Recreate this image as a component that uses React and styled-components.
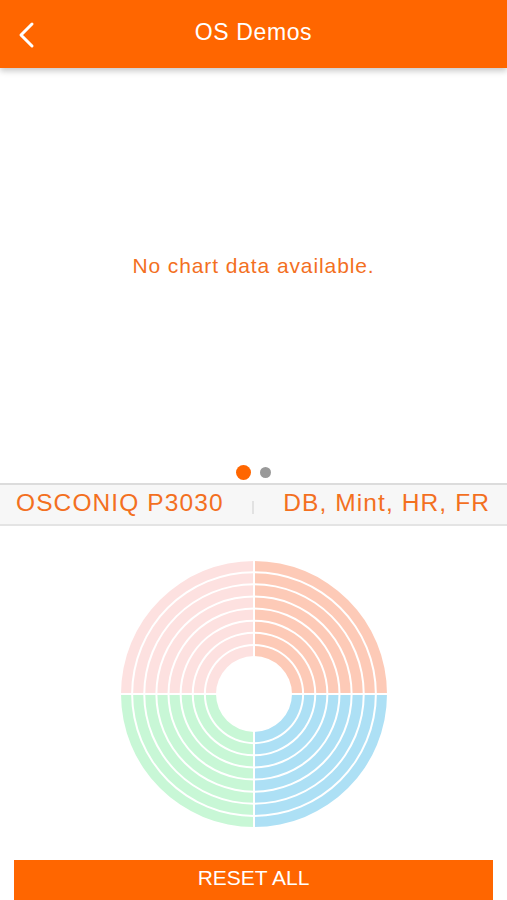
import styled, { createGlobalStyle } from "styled-components";

const ORANGE = "#ff6600";
const TEXT_ORANGE = "#f3701f";

const GlobalStyle = createGlobalStyle`
  html, body {
    margin: 0;
    padding: 0;
    background: #ffffff;
    font-family: "Liberation Sans", Arial, sans-serif;
  }
`;

const quadrants = [
  { start: 180, end: 270, color: "#fde1e0" },
  { start: 270, end: 360, color: "#fdcab7" },
  { start: 90, end: 180, color: "#c8f7d6" },
  { start: 0, end: 90, color: "#ade0f5" },
];

const CX = 135;
const CY = 135;
const HOLE = 38;
const OUTER = 133;
const RINGS = 8;
const GAP = 2;
const STEP = (OUTER - HOLE + GAP) / RINGS;

const polar = (r, deg) => {
  const a = (deg * Math.PI) / 180;
  return [CX + r * Math.cos(a), CY + r * Math.sin(a)];
};

const sector = (r1, r2, a1, a2) => {
  const [x1, y1] = polar(r2, a1);
  const [x2, y2] = polar(r2, a2);
  const [x3, y3] = polar(r1, a2);
  const [x4, y4] = polar(r1, a1);
  return `M${x1} ${y1} A${r2} ${r2} 0 0 1 ${x2} ${y2} L${x3} ${y3} A${r1} ${r1} 0 0 0 ${x4} ${y4} Z`;
};

const Donut = () => (
  <svg width="270" height="270" viewBox="0 0 270 270">
    {quadrants.map((q) =>
      Array.from({ length: RINGS }).map((_, i) => {
        const inner = HOLE + i * STEP;
        const outer = inner + STEP - GAP;
        return (
          <path
            key={`${q.start}-${i}`}
            d={sector(inner, outer, q.start, q.end)}
            fill={q.color}
          />
        );
      })
    )}
    <rect x={CX - 1} y={0} width={2} height={270} fill="#ffffff" />
    <rect x={0} y={CY - 1} width={270} height={2} fill="#ffffff" />
  </svg>
);

export default function App() {
  return (
    <>
      <GlobalStyle />
      <Page>
        <Header>
          <BackButton aria-label="Back">
            <svg width="20" height="28" viewBox="0 0 20 28">
              <polyline
                points="15,3 4,14 15,25"
                fill="none"
                stroke="#ffffff"
                strokeWidth="3"
                strokeLinecap="round"
                strokeLinejoin="round"
              />
            </svg>
          </BackButton>
          <Title>OS Demos</Title>
        </Header>

        <EmptyChart>No chart data available.</EmptyChart>

        <Pager>
          <Dot $active />
          <Dot />
        </Pager>

        <InfoBand>
          <ProductName>OSCONIQ P3030</ProductName>
          <Separator />
          <Tags>DB, Mint, HR, FR</Tags>
        </InfoBand>

        <WheelArea>
          <Donut />
        </WheelArea>

        <ResetButton>RESET ALL</ResetButton>
      </Page>
    </>
  );
}

const Page = styled.div`
  width: 507px;
  height: 900px;
  display: flex;
  flex-direction: column;
  overflow: hidden;
`;

const Header = styled.header`
  position: relative;
  height: 68px;
  flex: none;
  background: ${ORANGE};
  display: flex;
  align-items: center;
  justify-content: center;
  box-shadow: 0 3px 6px rgba(0, 0, 0, 0.22);
  z-index: 1;
`;

const BackButton = styled.button`
  position: absolute;
  left: 17px;
  top: 21px;
  padding: 0;
  border: none;
  background: none;
  display: flex;
`;

const Title = styled.h1`
  margin: 0;
  margin-top: -4px;
  font-size: 23px;
  font-weight: 400;
  letter-spacing: 0.6px;
  color: #ffffff;
`;

const EmptyChart = styled.div`
  height: 396px;
  flex: none;
  display: flex;
  align-items: center;
  justify-content: center;
  font-size: 21px;
  letter-spacing: 0.9px;
  color: ${TEXT_ORANGE};
`;

const Pager = styled.div`
  height: 17px;
  flex: none;
  display: flex;
  align-items: center;
  justify-content: center;
  gap: 9px;
  margin-bottom: 2px;
`;

const Dot = styled.span`
  width: ${(p) => (p.$active ? "15px" : "11px")};
  height: ${(p) => (p.$active ? "15px" : "11px")};
  border-radius: 50%;
  background: ${(p) => (p.$active ? ORANGE : "#999999")};
`;

const InfoBand = styled.div`
  height: 39px;
  flex: none;
  box-sizing: content-box;
  display: grid;
  grid-template-columns: 1fr auto 1fr;
  align-items: center;
  background: #f7f7f7;
  border-top: 2px solid #dcdcdc;
  border-bottom: 2px solid #e4e4e4;
  padding: 0 18px 0 16px;
  font-size: 24.5px;
  letter-spacing: 1.1px;
  color: ${TEXT_ORANGE};
`;

const ProductName = styled.span`
  justify-self: start;
  white-space: nowrap;
  margin-top: -3px;
`;

const Separator = styled.span`
  width: 2px;
  height: 13px;
  margin-top: 6px;
  background: #e2e2e2;
`;

const Tags = styled.span`
  justify-self: end;
  white-space: nowrap;
  margin-right: -1px;
  margin-top: -3px;
`;

const WheelArea = styled.div`
  height: 333px;
  flex: none;
  display: flex;
  align-items: center;
  justify-content: center;
  padding-top: 1px;
`;

const ResetButton = styled.button`
  margin: 0 14px;
  height: 40px;
  flex: none;
  border: none;
  background: ${ORANGE};
  color: #ffffff;
  font-family: "Liberation Sans", Arial, sans-serif;
  font-size: 21px;
  padding: 0 0 5px;
`;
